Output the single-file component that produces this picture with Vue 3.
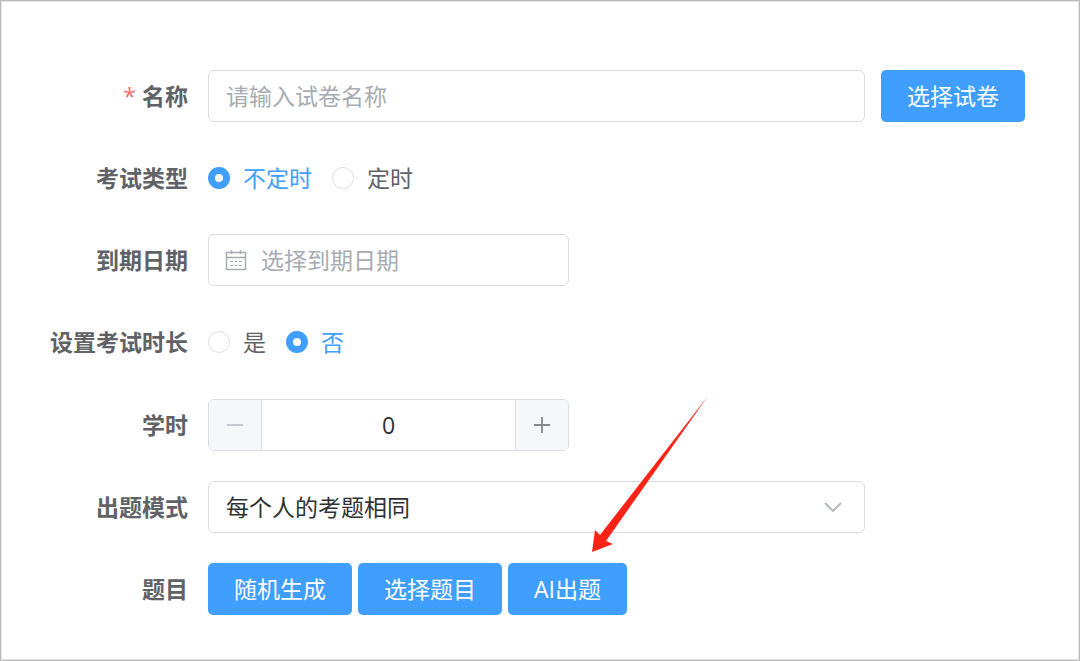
<template>
    <form class="exam-form" @submit.prevent>
        <div class="form-item">
            <label class="form-label" for="name"><span class="required">*</span>名称</label>
            <input id="name" v-model="form.name" class="text-input" type="text" placeholder="请输入试卷名称">
            <button class="btn" type="button">选择试卷</button>
        </div>

        <div class="form-item" role="radiogroup" aria-labelledby="type-label">
            <span id="type-label" class="form-label">考试类型</span>
            <div class="radio-group">
                <label v-for="item in types" :key="item" class="radio">
                    <input v-model="form.type" type="radio" name="type" :value="item">
                    <span>{{ item }}</span>
                </label>
            </div>
        </div>

        <div class="form-item">
            <label class="form-label" for="date">到期日期</label>
            <div class="date-box">
                <svg class="date-icon" viewBox="0 0 22 22" fill="none" stroke="#a8abb2">
                    <path stroke-width="1.5" d="M1.5 3.5h19v17h-19zM1.5 8.5h19M6.5 1v4M15.5 1v4" />
                    <path d="M5 12.5h3M9.5 12.5h3M14 12.5h3M5 16.5h3M9.5 16.5h3M14 16.5h3" />
                </svg>
                <input id="date" v-model="form.date" class="text-input" type="text" placeholder="选择到期日期">
            </div>
        </div>

        <div class="form-item" role="radiogroup" aria-labelledby="limit-label">
            <span id="limit-label" class="form-label">设置考试时长</span>
            <div class="radio-group">
                <label v-for="item in limits" :key="item" class="radio">
                    <input v-model="form.limit" type="radio" name="limit" :value="item">
                    <span>{{ item }}</span>
                </label>
            </div>
        </div>

        <div class="form-item">
            <label class="form-label" for="hours">学时</label>
            <div class="number-box">
                <button class="step" type="button" :disabled="form.hours <= 0" aria-label="-" @click="form.hours--">
                    <svg viewBox="0 0 20 20" stroke="currentColor" stroke-width="2"><path d="M1 10h18" /></svg>
                </button>
                <input id="hours" v-model.number="form.hours" type="text" inputmode="numeric">
                <button class="step" type="button" aria-label="+" @click="form.hours++">
                    <svg viewBox="0 0 20 20" stroke="currentColor" stroke-width="2"><path d="M1 10h18M10 1v18" /></svg>
                </button>
            </div>
        </div>

        <div class="form-item">
            <label class="form-label" for="mode">出题模式</label>
            <div class="select-box">
                <select id="mode" v-model="form.mode" class="text-input">
                    <option v-for="item in modes" :key="item">{{ item }}</option>
                </select>
                <svg class="select-arrow" viewBox="0 0 18 10" fill="none" stroke="#b4b7bd" stroke-width="2">
                    <path d="M1 1l8 8 8-8" />
                </svg>
            </div>
        </div>

        <div class="form-item">
            <span class="form-label">题目</span>
            <div class="btn-group">
                <button class="btn" type="button">随机生成</button>
                <button class="btn" type="button">选择题目</button>
                <div class="ai-box">
                    <button class="btn" type="button">AI出题</button>
                    <svg class="pointer" viewBox="0 0 116 157" fill="#ff2216">
                        <path d="M116 0L14 145l7 3L0 156 3 134l5 5z" />
                    </svg>
                </div>
            </div>
        </div>
    </form>
</template>

<script setup>
import { reactive } from 'vue';

const types = ['不定时', '定时'];
const limits = ['是', '否'];
const modes = ['每个人的考题相同'];

const form = reactive({
    name: '',
    type: '不定时',
    date: '',
    limit: '否',
    hours: 0,
    mode: '每个人的考题相同'
});
</script>

<style>
    body {
        margin: 0;
        background: #fff;
    }
</style>

<style scoped>
    .exam-form {
        box-sizing: border-box;
        min-height: 100vh;
        padding: 69px 54px 45px 47px;
        border: 1px solid #b9b9b9;
        box-shadow: inset 0 0 0 1px #e4e4e4;
        display: flex;
        flex-direction: column;
        justify-content: space-between;
        gap: 30px;
        font-family: "Open Sans", "Noto Sans CJK SC", sans-serif;
        font-size: 23px;
        line-height: 32px;
        color: #606266;
    }

    .exam-form input,
    .exam-form select,
    .exam-form button {
        box-sizing: border-box;
        margin: 0;
        font: inherit;
    }

    .form-item {
        display: grid;
        grid-template-columns: 144px 1fr 144px;
        column-gap: 16px;
        align-items: center;
        min-height: 52px;
    }

    .form-label {
        padding-right: 4px;
        font-weight: 700;
        text-align: right;
        white-space: nowrap;
    }

    .required {
        margin-right: 6px;
        font-weight: 400;
        color: #f56c6c;
    }

    .text-input {
        width: 100%;
        height: 52px;
        padding: 0 17px;
        border: 1px solid #d9dce2;
        border-radius: 6px;
        background: #fff;
        color: #303133;
        outline: none;
    }

    .text-input::placeholder {
        color: #a8abb2;
        opacity: 1;
    }

    .btn {
        height: 52px;
        padding: 0 26px;
        border: none;
        border-radius: 5px;
        background: #409eff;
        color: #fff;
        white-space: nowrap;
        cursor: pointer;
    }

    .radio-group {
        display: flex;
        gap: 20px;
    }

    .radio {
        display: flex;
        align-items: center;
        gap: 13px;
        cursor: pointer;
    }

    .radio input {
        appearance: none;
        width: 22px;
        height: 22px;
        border: 1px solid #dcdfe6;
        border-radius: 50%;
        background: #fff;
    }

    .radio input:checked {
        border: 7px solid #409eff;
    }

    .radio input:checked + span {
        color: #409eff;
    }

    .date-box {
        position: relative;
        width: 55%;
    }

    .date-box .text-input {
        padding-left: 52px;
    }

    .date-icon {
        position: absolute;
        top: 15px;
        left: 17px;
        width: 22px;
        height: 22px;
    }

    .number-box {
        box-sizing: border-box;
        display: flex;
        width: 55%;
        height: 52px;
        border: 1px solid #d9dce2;
        border-radius: 6px;
        overflow: hidden;
    }

    .number-box input {
        flex: 1;
        min-width: 0;
        padding: 0;
        border: none;
        color: #303133;
        text-align: center;
        outline: none;
    }

    .step {
        display: flex;
        align-items: center;
        justify-content: center;
        width: 53px;
        padding: 0;
        border: none;
        background: #f5f7fa;
        color: #85878c;
    }

    .step:first-child {
        border-right: 1px solid #dcdfe6;
    }

    .step:last-child {
        border-left: 1px solid #dcdfe6;
    }

    .step:disabled {
        color: #c5c8ce;
    }

    .step svg {
        width: 18px;
        height: 18px;
    }

    .select-box {
        position: relative;
    }

    .select-box select {
        appearance: none;
    }

    .select-arrow {
        position: absolute;
        top: 21px;
        right: 23px;
        width: 18px;
        height: 10px;
        pointer-events: none;
    }

    .btn-group {
        display: flex;
        grid-column: 2 / -1;
        gap: 6px;
    }

    .ai-box {
        position: relative;
    }

    .pointer {
        position: absolute;
        left: 84px;
        bottom: calc(100% + 10px);
        width: 116px;
        height: 157px;
        pointer-events: none;
    }
</style>
